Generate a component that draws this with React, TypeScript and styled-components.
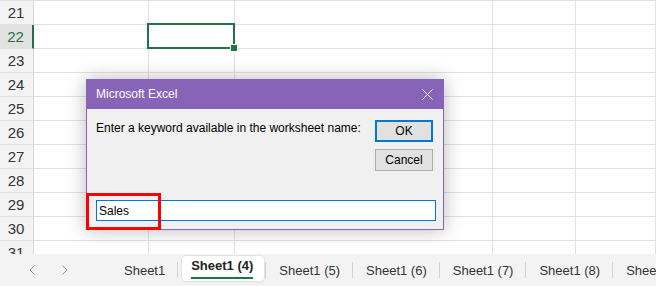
import React, { FC } from 'react';
import styled, { createGlobalStyle } from 'styled-components';

const GlobalStyle = createGlobalStyle`
  html, body {
    margin: 0;
    padding: 0;
    overflow: hidden;
    background: #ffffff;
  }
  * {
    box-sizing: border-box;
  }
`;

const excelGreen = '#217346';
const gridLine = '#e1e1e1';

const Page = styled.div`
  position: relative;
  width: 656px;
  height: 286px;
  display: flex;
  flex-direction: column;
  overflow: hidden;
  font-family: 'Liberation Sans', Arial, sans-serif;
`;

const Grid = styled.div`
  height: 254px;
  overflow: hidden;
  border-top: 1px solid ${gridLine};
`;

const Row = styled.div`
  display: flex;
  height: 24px;
  flex-shrink: 0;
`;

const RowHeader = styled.div<{ selected?: boolean }>`
  width: 34px;
  flex-shrink: 0;
  display: flex;
  align-items: center;
  justify-content: center;
  font-size: 15px;
  padding-right: 1px;
  color: ${(p) => (p.selected ? excelGreen : '#333333')};
  background: ${(p) => (p.selected ? '#e1e1e1' : '#f3f3f3')};
  border-bottom: 1px solid ${gridLine};
  border-right: ${(p) => (p.selected ? `2px solid ${excelGreen}` : '1px solid #d4d4d4')};
`;

const Cell = styled.div<{ width?: number }>`
  position: relative;
  width: ${(p) => (p.width ? `${p.width}px` : 'auto')};
  flex: ${(p) => (p.width ? '0 0 auto' : '1 1 auto')};
  border-right: 1px solid ${gridLine};
  border-bottom: 1px solid ${gridLine};
`;

const Selection = styled.div`
  position: absolute;
  left: -2px;
  top: -2px;
  right: -1px;
  bottom: -1px;
  border: 2px solid ${excelGreen};
  z-index: 1;
`;

const FillHandle = styled.div`
  position: absolute;
  right: -4px;
  bottom: -4px;
  width: 6px;
  height: 6px;
  background: ${excelGreen};
  outline: 1px solid #ffffff;
`;

const Dialog = styled.div`
  position: absolute;
  left: 86px;
  top: 79px;
  width: 358px;
  height: 151px;
  display: flex;
  flex-direction: column;
  background: #f0f0f0;
  border: 1px solid #8764b8;
  border-top: none;
  box-shadow: 0 0 18px rgba(0, 0, 0, 0.28);
  z-index: 5;
  font-family: 'Liberation Sans', Arial, sans-serif;
`;

const TitleBar = styled.div`
  height: 30px;
  margin: 0 -1px;
  background: #8764b8;
  display: flex;
  align-items: center;
  justify-content: space-between;
  padding: 0 11px 0 10px;
  color: #ffffff;
  font-size: 12px;
`;

const CloseButton = styled.div`
  width: 12px;
  height: 12px;
  display: flex;
  align-items: center;
  justify-content: center;
`;

const DialogBody = styled.div`
  flex: 1;
  display: flex;
  flex-direction: column;
  padding: 11px 9px 8px 9px;
`;

const PromptRow = styled.div`
  display: flex;
  justify-content: space-between;
`;

const Prompt = styled.div`
  font-size: 12px;
  line-height: 16px;
  color: #000000;
`;

const Buttons = styled.div`
  display: flex;
  flex-direction: column;
  gap: 7px;
  margin-right: 1px;
`;

const DialogButton = styled.div<{ primary?: boolean }>`
  width: 58px;
  height: 22px;
  display: flex;
  align-items: center;
  justify-content: center;
  font-size: 12px;
  color: #000000;
  background: #e1e1e1;
  border: ${(p) => (p.primary ? '2px solid #0078d7' : '1px solid #adadad')};
`;

const InputBox = styled.div`
  margin-top: auto;
  width: 340px;
  height: 21px;
  border: 1px solid #0078d7;
  background: #ffffff;
  display: flex;
  align-items: center;
  padding-left: 2px;
  font-size: 12px;
  color: #000000;
`;

const Highlight = styled.div`
  position: absolute;
  left: 86px;
  top: 193px;
  width: 75px;
  height: 37px;
  border: 3px solid #ff0000;
  z-index: 6;
`;

const TabBar = styled.div`
  height: 32px;
  display: flex;
  align-items: center;
  background: #f3f3f3;
  font-family: 'Liberation Sans', Arial, sans-serif;
  white-space: nowrap;
`;

const Nav = styled.div`
  width: 111px;
  flex-shrink: 0;
  display: flex;
  padding-left: 15px;
`;

const NavButton = styled.div`
  width: 33px;
  height: 20px;
  display: flex;
  align-items: center;
  justify-content: center;
`;

const Tab = styled.div`
  flex-shrink: 0;
  padding: 0 12px 0 13px;
  font-size: 13px;
  color: #333333;
`;

const ActiveTab = styled.div`
  flex-shrink: 0;
  align-self: flex-start;
  margin: 2px 1px 0 4px;
  height: 25px;
  padding: 2px 11px 0 9px;
  background: #ffffff;
  border-radius: 4px;
  box-shadow: 0 0 0 1px #e3e3e3, 0 1px 2px rgba(0, 0, 0, 0.12);
  font-size: 13px;
  font-weight: 700;
  color: #212121;
`;

const ActiveLabel = styled.span`
  display: inline-block;
  line-height: 16px;
  padding-bottom: 3px;
  border-bottom: 2px solid #107c41;
`;

const Separator = styled.div`
  width: 1px;
  height: 16px;
  flex-shrink: 0;
  background: #d2d2d2;
`;

const columns = [115, 86, 258, 83, 0];
const rows = [21, 22, 23, 24, 25, 26, 27, 28, 29, 30, 31];
const tabs = ['Sheet1', 'Sheet1 (4)', 'Sheet1 (5)', 'Sheet1 (6)', 'Sheet1 (7)', 'Sheet1 (8)', 'Sheet1 (9)'];

const Chevron: FC<{ dir: 'left' | 'right' }> = ({ dir }) => (
  <svg width="8" height="10" viewBox="0 0 8 10">
    <path
      d={dir === 'left' ? 'M6.5 0.5 L2 5 L6.5 9.5' : 'M1.5 0.5 L6 5 L1.5 9.5'}
      fill="none"
      stroke="#9a9a9a"
      strokeWidth="1"
    />
  </svg>
);

const App: FC = () => {
  return (
    <Page>
      <GlobalStyle />
      <Grid>
        {rows.map((r) => (
          <Row key={r}>
            <RowHeader selected={r === 22}>{r}</RowHeader>
            {columns.map((w, i) => (
              <Cell key={i} width={w || undefined}>
                {r === 22 && i === 1 && (
                  <Selection>
                    <FillHandle />
                  </Selection>
                )}
              </Cell>
            ))}
          </Row>
        ))}
      </Grid>

      <Dialog>
        <TitleBar>
          <span>Microsoft Excel</span>
          <CloseButton>
            <svg width="11" height="11" viewBox="0 0 11 11">
              <path d="M0.5 0.5 L10.5 10.5 M10.5 0.5 L0.5 10.5" stroke="#ffffff" strokeWidth="1" />
            </svg>
          </CloseButton>
        </TitleBar>
        <DialogBody>
          <PromptRow>
            <Prompt>Enter a keyword available in the worksheet name:</Prompt>
            <Buttons>
              <DialogButton primary>OK</DialogButton>
              <DialogButton>Cancel</DialogButton>
            </Buttons>
          </PromptRow>
          <InputBox>Sales</InputBox>
        </DialogBody>
      </Dialog>
      <Highlight />

      <TabBar>
        <Nav>
          <NavButton>
            <Chevron dir="left" />
          </NavButton>
          <NavButton>
            <Chevron dir="right" />
          </NavButton>
        </Nav>
        {tabs.map((t, i) => (
          <React.Fragment key={t}>
            {i === 1 ? (
              <ActiveTab>
                <ActiveLabel>{t}</ActiveLabel>
              </ActiveTab>
            ) : (
              <Tab>{t}</Tab>
            )}
            <Separator />
          </React.Fragment>
        ))}
      </TabBar>
    </Page>
  );
};

export default App;
